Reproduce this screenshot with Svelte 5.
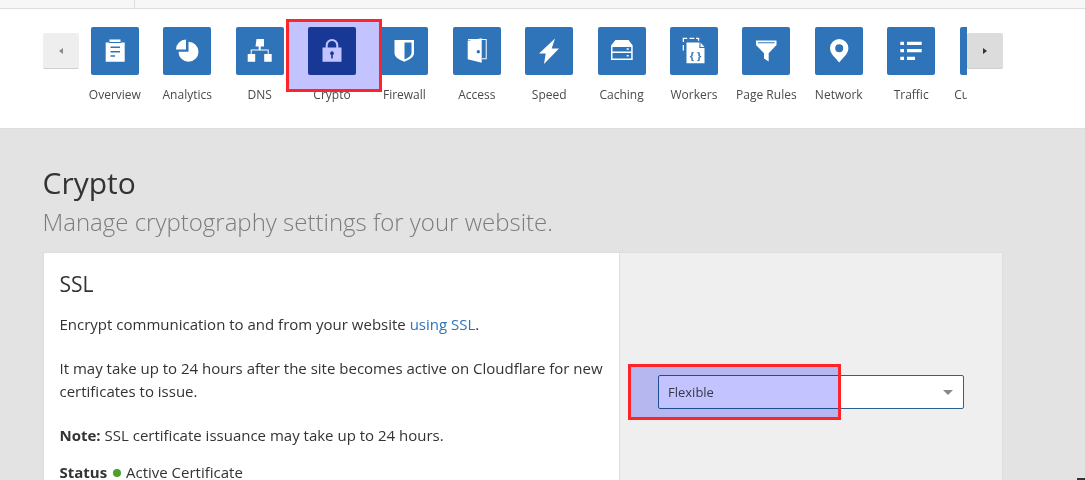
<script>
  const tabs = [
    { label: 'Overview' },
    { label: 'Analytics' },
    { label: 'DNS' },
    { label: 'Crypto', active: true },
    { label: 'Firewall' },
    { label: 'Access' },
    { label: 'Speed' },
    { label: 'Caching' },
    { label: 'Workers' },
    { label: 'Page Rules' },
    { label: 'Network' },
    { label: 'Traffic' },
    { label: 'Customize' }
  ];
</script>

<div class="topbar"><div class="topcell"></div></div>

<nav class="nav">
  <button class="arrow left" aria-label="Previous"><span></span></button>
  <div class="strip">
    <ul class="tabs">
      {#each tabs as tab}
        <li class="tab" class:active={tab.active}>
          <div class="tile">
            <svg viewBox="0 0 48 48" width="48" height="48" fill="#fff" fill-rule="evenodd">
              {#if tab.label === 'Overview'}
                <path d="M18.500 12.500h11V15h-11zM14.700 15.500H18V16h12v-.5h3.700v19.200h-19zM19.500 19.500v1.500h9.500v-1.500zM19.500 24v1.500h9.500V24zM19.500 28.300v1.500h4.500v-1.500z"/>
              {:else if tab.label === 'Analytics'}
                <path d="M23 12.500v10H13a10 10 0 0 1 10-10zM25.500 14.700a10 10 0 1 1-10 10h10z"/>
              {:else if tab.label === 'DNS'}
                <path d="M20.500 12H28v7.500h-3.300v3h8V27h3v7.700h-7.500V27h3.500v-3.500h-16V27h3.500v7.700h-7.500V27h3v-4.500h8v-3h-3.200z"/>
              {:else if tab.label === 'Crypto'}
                <path d="M14.500 20.500h3.200V18.300a6.300 6.300 0 0 1 12.600 0v2.200h3.200v14.200h-19zM19.700 20.500h8.600V18.300a4.300 4.300 0 0 0-8.600 0zM24 24.300a2 2 0 0 0-.8 3.800v3.500h1.600v-3.500a2 2 0 0 0-.8-3.800z"/>
              {:else if tab.label === 'Firewall'}
                <path d="M14.500 13H34v13c0 4-4 6.500-9.700 8.700-5.800-2.200-9.800-4.700-9.800-8.700zM24.500 15.500v17c4.500-2 7-4 7-6.500V15.500z"/>
              {:else if tab.label === 'Access'}
                <path d="M14.700 13.700l14-2.400v24.400l-14-3.400zM25.300 23a1.700 1.700 0 1 0 0 3.400 1.700 1.700 0 0 0 0-3.400z"/>
                <path d="M15 12h18.700v20.300H29v-1h3.700V13H15z"/>
              {:else if tab.label === 'Speed'}
                <path d="M30 11.500L14 26.500h6.700L19 37l15-15.500h-7.300z"/>
              {:else if tab.label === 'Caching'}
                <path d="M17.500 13h13l4.200 5.500V33H13V18.500zM14.500 20v4.500h18.700V20zM14.500 26v5.500h18.700V26z"/>
                <path d="M28.700 21.300h2v1.500h-2zM28.700 28h2v1.500h-2z"/>
              {:else if tab.label === 'Workers'}
                <path d="M16.500 15.500h13l-.2 5.500h5.200v15.300h-18zM30.500 15.500l4 4.500h-4z"/>
                <path d="M12.700 10.700h4.500V12h-3.200v3h-1.300zM19.500 10.700h4.800V12h-4.800zM26 10.700h3.200v3h-1.300V12H26zM12.700 18h1.300v5.500h-1.300z"/>
                <text class="braces" x="25.500" y="32.500">{'{ }'}</text>
              {:else if tab.label === 'Page Rules'}
                <path d="M14 13.500h20.500V18l-7.800 8.300v8.200L22 31.500v-5.200L14 18zM16 15.200v1h16.500v-1z"/>
              {:else if tab.label === 'Network'}
                <path d="M24.200 35.500C21 31 15 27 15 21.200a9.200 9.200 0 0 1 18.400 0c0 5.800-6 9.800-9.200 14.300zM24.200 17.200a4 4 0 1 0 0 8 4 4 0 0 0 0-8z"/>
              {:else if tab.label === 'Traffic'}
                <path d="M13.300 14.700H17V18h-3.700zM20 14.700h14.700V18H20zM13.300 22H17v3.300h-3.700zM20 22h14.700v3.300H20zM13.300 29.700H17V33h-3.700zM20 29.700h8V33h-8z"/>
              {/if}
            </svg>
          </div>
          <span class="label">{tab.label}</span>
        </li>
      {/each}
    </ul>
  </div>
  <button class="arrow right" aria-label="Next"><span></span></button>
</nav>

<main class="page">
  <h1>Crypto</h1>
  <p class="sub">Manage cryptography settings for your website.</p>

  <section class="card">
    <div class="body">
      <h2>SSL</h2>
      <p>Encrypt communication to and from your website <a href="#ssl">using SSL</a>.</p>
      <p>It may take up to 24 hours after the site becomes active on Cloudflare for new certificates to issue.</p>
      <p class="note"><strong>Note:</strong> SSL certificate issuance may take up to 24 hours.</p>
      <p><strong>Status</strong> <i class="dot"></i> Active Certificate</p>
    </div>
    <div class="side">
      <div class="select">
        <span>Flexible</span>
        <i class="caret"></i>
      </div>
    </div>
  </section>
</main>

<div class="mark crypto-mark"></div>
<div class="mark select-mark"></div>
<div class="corner"></div>

<style>
  :global(body) {
    margin: 0;
    background: #e3e3e3;
    font-family: "Open Sans", sans-serif;
    color: #333;
    overflow: hidden;
  }

  .topbar {
    height: 8px;
    background: #f7f7f7;
    border-bottom: 1px solid #dedede;
  }
  .topcell {
    width: 134px;
    height: 8px;
    border-right: 1px solid #dedede;
  }

  .nav {
    display: flex;
    align-items: flex-start;
    height: 120px;
    padding: 0 82px 0 43px;
    background: #fff;
    box-sizing: border-box;
    border-bottom: 1px solid #dedede;
  }
  .arrow {
    flex: none;
    display: flex;
    align-items: center;
    justify-content: center;
    width: 36px;
    height: 36px;
    margin-top: 24px;
    padding: 0;
    border: 0;
    border-bottom: 1px solid #cfcfcf;
    border-radius: 2px;
    background: #eee;
    z-index: 1;
  }
  .arrow span {
    width: 0;
    height: 0;
    border-top: 3.5px solid transparent;
    border-bottom: 3.5px solid transparent;
  }
  .arrow.left span {
    border-right: 4px solid #8a8a8a;
  }
  .arrow.right {
    background: #dcdcdc;
  }
  .arrow.right span {
    border-left: 4px solid #333;
  }

  .strip {
    flex: 1;
    overflow: hidden;
    height: 100%;
  }
  .tabs {
    display: flex;
    gap: 24.4px;
    margin: 18px 0 0 11.85px;
    padding: 0;
    list-style: none;
    width: max-content;
  }
  .tab {
    display: flex;
    flex-direction: column;
    align-items: center;
    width: 48px;
  }
  .tile {
    width: 48px;
    height: 48px;
    border-radius: 2px;
    background: #2f73b9;
  }
  .tile svg {
    display: block;
  }
  .active .tile {
    background: #1f4996;
  }
  .braces {
    font-size: 11px;
    font-weight: 700;
    text-anchor: middle;
    fill: #2f73b9;
  }
  .label {
    margin-top: 12px;
    font-size: 12px;
    line-height: 16px;
    color: #4a4a4a;
    white-space: nowrap;
  }

  .page {
    padding: 35px 82px 0 43px;
  }
  h1 {
    margin: 0 0 0 -0.5px;
    font-size: 30px;
    font-weight: 400;
    line-height: 38px;
    color: #333;
  }
  .sub {
    margin: 4px 0 0 -0.5px;
    font-size: 24px;
    font-weight: 300;
    line-height: 32px;
    color: #7c7c7c;
  }

  .card {
    display: flex;
    margin-top: 14px;
    height: 300px;
    border: 1px solid #dedede;
    border-radius: 2px;
    background: #fff;
  }
  .body {
    width: 549px;
    padding: 0 10px 0 15.5px;
    border-right: 1px solid #dedede;
    font-size: 15px;
    line-height: 22.5px;
  }
  h2 {
    margin: 16px 0 14px;
    font-size: 21px;
    font-weight: 400;
    line-height: 30px;
  }
  .body p {
    margin: 0 0 21.5px;
  }
  .body p.note {
    margin-bottom: 15px;
  }
  a {
    color: #2f73b9;
    text-decoration: none;
  }
  strong {
    font-weight: 700;
  }
  .dot {
    display: inline-block;
    width: 8px;
    height: 8px;
    margin: 0 1px 1px 2px;
    border-radius: 50%;
    background: #4c9e2e;
  }

  .side {
    flex: 1;
    background: #efefef;
    padding: 122px 38px 0;
  }
  .select {
    display: flex;
    align-items: center;
    justify-content: space-between;
    height: 32px;
    padding: 0 10px 0 9.5px;
    border: 1px solid #2a6295;
    border-radius: 2px;
    background: #fff;
    font-size: 13px;
    color: #4a4a4a;
  }
  .caret {
    width: 0;
    height: 0;
    border-left: 5px solid transparent;
    border-right: 5px solid transparent;
    border-top: 5px solid #888;
  }

  /* annotation boxes drawn over the screenshot */
  .mark {
    position: absolute;
    box-sizing: border-box;
    border: 3px solid #ff2429;
  }
  .mark::before {
    content: "";
    position: absolute;
    inset: 0;
    background: #c3c3ff;
    mix-blend-mode: multiply;
  }
  .crypto-mark {
    left: 286px;
    top: 19px;
    width: 96px;
    height: 73px;
  }
  .select-mark {
    left: 628px;
    top: 364px;
    width: 213px;
    height: 56px;
  }
  .corner {
    position: absolute;
    right: 0;
    bottom: 0;
    width: 8px;
    height: 2px;
    background: #333;
  }
</style>
